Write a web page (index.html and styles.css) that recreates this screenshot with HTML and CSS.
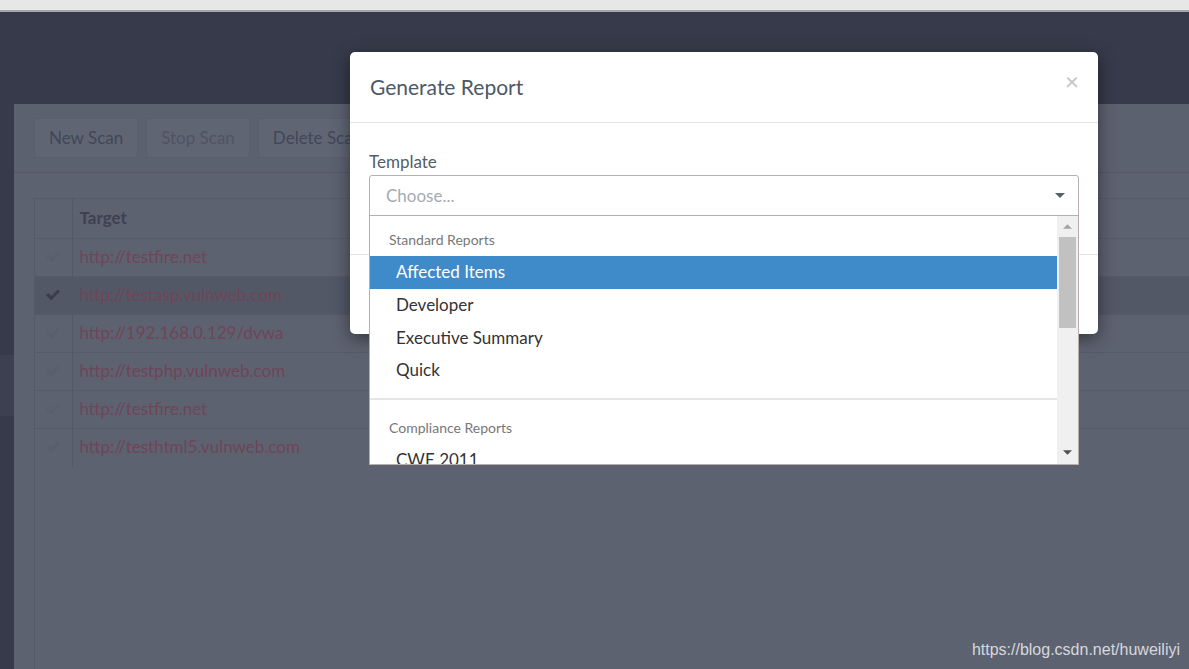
FILE: index.html
```html
<!DOCTYPE html>
<html lang="en">
<head>
<meta charset="utf-8">
<title>Generate Report</title>
<link rel="stylesheet" href="styles.css">
</head>
<body>
<div class="chrome"></div>
<header class="topbar"></header>
<div class="app">
  <aside class="sidebar"><div class="side-active"></div></aside>
  <main class="main">
    <div class="toolbar">
      <button class="btn">New Scan</button>
      <button class="btn btn-disabled">Stop Scan</button>
      <button class="btn">Delete Scan</button>
    </div>
    <div class="table-wrap">
      <table class="scans">
        <thead>
          <tr><th class="c-check"></th><th class="c-target">Target</th></tr>
        </thead>
        <tbody>
          <tr><td class="c-check"><svg class="chk" viewBox="0 0 16 13"><path d="M1 7.2 L3.2 5 L6.2 8 L12.8 1.4 L15 3.6 L6.2 12.4 Z"/></svg></td><td class="c-target"><span class="link">http://testfire.net</span></td></tr>
          <tr class="selected"><td class="c-check"><svg class="chk" viewBox="0 0 16 13"><path d="M1 7.2 L3.2 5 L6.2 8 L12.8 1.4 L15 3.6 L6.2 12.4 Z"/></svg></td><td class="c-target"><span class="link">http://testasp.vulnweb.com</span></td></tr>
          <tr><td class="c-check"><svg class="chk" viewBox="0 0 16 13"><path d="M1 7.2 L3.2 5 L6.2 8 L12.8 1.4 L15 3.6 L6.2 12.4 Z"/></svg></td><td class="c-target"><span class="link">http://192.168.0.129/dvwa</span></td></tr>
          <tr><td class="c-check"><svg class="chk" viewBox="0 0 16 13"><path d="M1 7.2 L3.2 5 L6.2 8 L12.8 1.4 L15 3.6 L6.2 12.4 Z"/></svg></td><td class="c-target"><span class="link">http://testphp.vulnweb.com</span></td></tr>
          <tr><td class="c-check"><svg class="chk" viewBox="0 0 16 13"><path d="M1 7.2 L3.2 5 L6.2 8 L12.8 1.4 L15 3.6 L6.2 12.4 Z"/></svg></td><td class="c-target"><span class="link">http://testfire.net</span></td></tr>
          <tr><td class="c-check"><svg class="chk" viewBox="0 0 16 13"><path d="M1 7.2 L3.2 5 L6.2 8 L12.8 1.4 L15 3.6 L6.2 12.4 Z"/></svg></td><td class="c-target"><span class="link">http://testhtml5.vulnweb.com</span></td></tr>
        </tbody>
      </table>
    </div>
  </main>
</div>

<div class="modal">
  <div class="modal-header">
    <h4 class="modal-title">Generate Report</h4>
    <span class="close">&times;</span>
  </div>
  <div class="modal-body">
    <label class="field-label">Template</label>
    <div class="select">
      <span class="placeholder">Choose...</span>
      <svg class="caret" viewBox="0 0 10 5"><path d="M0 0 H10 L5 5 Z"/></svg>
    </div>
  </div>
  <div class="modal-footer"></div>

  <div class="dropdown">
    <div class="options">
      <div class="group">Standard Reports</div>
      <div class="opt active">Affected Items</div>
      <div class="opt">Developer</div>
      <div class="opt">Executive Summary</div>
      <div class="opt">Quick</div>
      <div class="divider"></div>
      <div class="group group-2">Compliance Reports</div>
      <div class="opt">CWE 2011</div>
    </div>
    <div class="scrollbar">
      <svg class="arr arr-up" viewBox="0 0 10 5"><path d="M0 5 H10 L5 0 Z"/></svg>
      <div class="thumb"></div>
      <svg class="arr arr-down" viewBox="0 0 10 5"><path d="M0 0 H10 L5 5 Z"/></svg>
    </div>
  </div>
</div>

<div class="watermark">https://blog.csdn.net/huweiliyi</div>
</body>
</html>
```

FILE: styles.css
```css
* { box-sizing: border-box; }
html, body { margin: 0; padding: 0; }
body {
  width: 1189px;
  height: 669px;
  overflow: hidden;
  background: #5d6270;
  font-family: "Lato", "Open Sans", sans-serif;
  font-size: 16px;
  position: relative;
}

.chrome {
  height: 12px;
  background: #e7e7e7;
  border-bottom: 2px solid #a4a5a8;
}
.topbar {
  height: 92px;
  background: #363a4a;
}
.app {
  display: flex;
  height: 565px;
}
.sidebar {
  width: 14px;
  background: #363a4a;
  padding-top: 251px;
}
.side-active {
  height: 61px;
  background: #3c4050;
}
.main {
  flex: 1;
  display: flex;
  flex-direction: column;
  background: #5d6270;
}
.toolbar {
  height: 69px;
  padding: 14px 0 0 20px;
  display: flex;
  gap: 8px;
  border-bottom: 1px solid #545866;
  background: #5c6170;
}
.btn {
  height: 40px;
  padding: 0 14px;
  background-color: #606574;
  border: 1px solid #5a5f6d;
  border-radius: 2px;
  font-family: inherit;
  font-size: 17px;
  line-height: 38px;
  padding-bottom: 2px;
  color: #424757;
}
.btn-disabled { color: #4f5463; }

.table-wrap {
  flex: 1;
  margin: 25px 0 0 20px;
  border-left: 1px solid #555a68;
}
.scans {
  width: 100%;
  border-collapse: collapse;
}
.scans th, .scans td {
  padding: 0;
  text-align: left;
  border-top: 1px solid #565b69;
}
.scans th {
  height: 40px;
  font-weight: 700;
  font-size: 17px;
  color: #3d4151;
  padding-bottom: 3px;
}
.scans td { height: 38px; font-size: 17px; padding-bottom: 2px; }
.c-check {
  width: 37px;
  border-right: 1px solid #535866;
  text-align: center !important;
}
.c-target { padding-left: 7px !important; }
.link { color: #6f4557; }
.chk { width: 16px; height: 13px; display: block; margin: 0 auto; fill: #5a5f6d; }
.selected td { background: #535867; }
.selected .chk { fill: #3a3e4c; }

/* Modal */
.modal {
  position: absolute;
  left: 350px;
  top: 52px;
  width: 748px;
  height: 282px;
  background: #fff;
  border-radius: 5px;
  box-shadow: 0 5px 18px rgba(0, 0, 0, 0.45);
  display: flex;
  flex-direction: column;
}
.modal-header {
  height: 71px;
  display: flex;
  align-items: center;
  justify-content: space-between;
  padding: 0 19px 0 20px;
  border-bottom: 1px solid #e5e5e5;
}
.modal-title {
  margin: 0;
  font-weight: 400;
  font-size: 21px;
  color: #4d5965;
  padding-bottom: 1px;
}
.close {
  font-size: 24px;
  line-height: 1;
  color: #c3c3c3;
  margin-top: -12px;
}
.modal-body {
  height: 132px;
  padding: 28px 19px 0 19px;
  border-bottom: 1px solid #e5e5e5;
}
.field-label {
  display: block;
  font-size: 17px;
  line-height: 22px;
  color: #535e69;
  margin-bottom: 2px;
}
.select {
  height: 41px;
  border: 1px solid #b9b0b0;
  border-radius: 3px 3px 0 0;
  display: flex;
  align-items: center;
  justify-content: space-between;
  padding: 0 13px 0 16px;
}
.placeholder { color: #a3abb3; font-size: 17px; }
.caret { width: 10px; height: 5px; fill: #55606b; }
.modal-footer { flex: 1; }

.dropdown {
  position: absolute;
  left: 19px;
  top: 163px;
  width: 710px;
  height: 250px;
  background: #fff;
  border: 1px solid #b8aeae;
  display: flex;
  overflow: hidden;
}
.options { flex: 1; }
.group {
  padding: 14px 0 6px 19px;
  line-height: 20px;
  font-size: 14px;
  color: #787878;
}
.group-2 { padding-top: 18px; }
.opt {
  height: 32.5px;
  line-height: 32px;
  padding-left: 26px;
  font-size: 17px;
  color: #333;
}
.opt.active { background: #3f8ac8; color: #fff; height: 33px; }
.divider {
  height: 2px;
  background: #e6e6e6;
  margin-top: 11px;
}
.scrollbar {
  width: 21px;
  background: #f0f0f0;
  display: flex;
  flex-direction: column;
  align-items: center;
  padding-top: 8px;
}
.arr { width: 9px; height: 5px; display: block; }
.arr-up { fill: #a3a3a3; }
.arr-down { fill: #505050; margin-top: auto; margin-bottom: 9px; }
.thumb {
  width: 17px;
  height: 91px;
  background: #c1c1c1;
  margin-top: 8px;
}

.watermark {
  position: absolute;
  right: 9px;
  bottom: 10px;
  font-family: "Liberation Sans", Arial, sans-serif;
  font-size: 16px;
  color: #d6d8dd;
}
```
